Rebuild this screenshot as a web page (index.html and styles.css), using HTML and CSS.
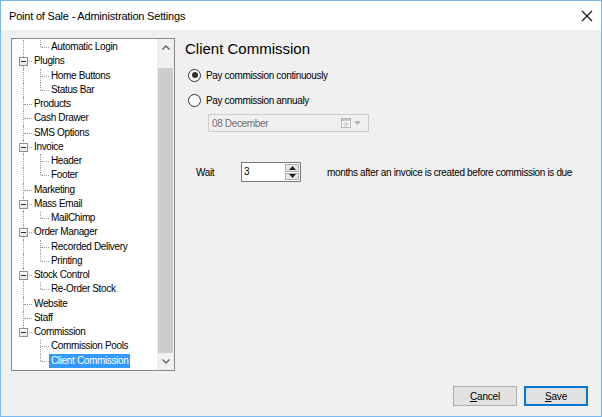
FILE: index.html
```html
<!DOCTYPE html>
<html lang="en">

<head>
    <meta charset="UTF-8">
    <meta name="viewport" content="width=device-width, initial-scale=1.0">
    <title>Point of Sale - Administration Settings</title>
    <link rel="stylesheet" href="styles.css">
</head>

<body>
    <div class="window">
        <div class="titlebar">
            <span class="title">Point of Sale - Administration Settings</span>
            <svg class="close" width="12" height="12" viewBox="0 0 12 12">
                <path d="M1 1 L11 11 M11 1 L1 11" stroke="#111" stroke-width="1.1" fill="none" />
            </svg>
        </div>

        <div class="content">
            <!-- Settings tree -->
            <div class="tree">
                <div class="tree-items">
                    <div class="row"><span class="cell v"></span><span class="cell l"></span><span class="label">Automatic Login</span></div>
                    <div class="row"><span class="cell t box"><i class="expander"></i></span><span class="label">Plugins</span></div>
                    <div class="row"><span class="cell v"></span><span class="cell t"></span><span class="label">Home Buttons</span></div>
                    <div class="row"><span class="cell v"></span><span class="cell l"></span><span class="label">Status Bar</span></div>
                    <div class="row"><span class="cell t"></span><span class="label">Products</span></div>
                    <div class="row"><span class="cell t"></span><span class="label">Cash Drawer</span></div>
                    <div class="row"><span class="cell t"></span><span class="label">SMS Options</span></div>
                    <div class="row"><span class="cell t box"><i class="expander"></i></span><span class="label">Invoice</span></div>
                    <div class="row"><span class="cell v"></span><span class="cell t"></span><span class="label">Header</span></div>
                    <div class="row"><span class="cell v"></span><span class="cell l"></span><span class="label">Footer</span></div>
                    <div class="row"><span class="cell t"></span><span class="label">Marketing</span></div>
                    <div class="row"><span class="cell t box"><i class="expander"></i></span><span class="label">Mass Email</span></div>
                    <div class="row"><span class="cell v"></span><span class="cell l"></span><span class="label">MailChimp</span></div>
                    <div class="row"><span class="cell t box"><i class="expander"></i></span><span class="label">Order Manager</span></div>
                    <div class="row"><span class="cell v"></span><span class="cell t"></span><span class="label">Recorded Delivery</span></div>
                    <div class="row"><span class="cell v"></span><span class="cell l"></span><span class="label">Printing</span></div>
                    <div class="row"><span class="cell t box"><i class="expander"></i></span><span class="label">Stock Control</span></div>
                    <div class="row"><span class="cell v"></span><span class="cell l"></span><span class="label">Re-Order Stock</span></div>
                    <div class="row"><span class="cell t"></span><span class="label">Website</span></div>
                    <div class="row"><span class="cell t"></span><span class="label">Staff</span></div>
                    <div class="row"><span class="cell l box"><i class="expander"></i></span><span class="label">Commission</span></div>
                    <div class="row"><span class="cell"></span><span class="cell t"></span><span class="label">Commission Pools</span></div>
                    <div class="row"><span class="cell"></span><span class="cell l"></span><span class="label selected">Client Commission</span></div>
                </div>
                <div class="scrollbar">
                    <div class="arrow">
                        <svg width="8" height="5" viewBox="0 0 8 5"><path d="M0.5 4.5 L4 1 L7.5 4.5" stroke="#606060" stroke-width="1.3" fill="none" /></svg>
                    </div>
                    <div class="track"><div class="thumb"></div></div>
                    <div class="arrow">
                        <svg width="8" height="5" viewBox="0 0 8 5"><path d="M0.5 0.5 L4 4 L7.5 0.5" stroke="#606060" stroke-width="1.3" fill="none" /></svg>
                    </div>
                </div>
            </div>

            <!-- Client commission settings -->
            <div class="panel">
                <h2>Client Commission</h2>
                <label class="radio first"><span class="dot checked"></span>Pay commission continuously</label>
                <label class="radio"><span class="dot"></span>Pay commission annualy</label>
                <div class="datepicker">
                    <span>08 December</span>
                    <span class="picker-icons">
                        <svg width="10" height="10" viewBox="0 0 10 10">
                            <rect x="0.5" y="0.5" width="9" height="9" fill="#fff" stroke="#b5b5b5" />
                            <rect x="1" y="1" width="8" height="2" fill="#c4c4c4" />
                            <path d="M2 5h6M2 7h6M4 4v5M6 4v5" stroke="#cfcfcf" />
                        </svg>
                        <svg width="7" height="4" viewBox="0 0 7 4"><path d="M0 0 L7 0 L3.5 4 Z" fill="#b5b5b5" /></svg>
                    </span>
                </div>
                <div class="wait">
                    <span class="wait-label">Wait</span>
                    <div class="numeric">
                        <span class="value">3</span>
                        <span class="spin">
                            <span class="spin-btn"><svg width="7" height="4" viewBox="0 0 7 4"><path d="M0 4 L7 4 L3.5 0 Z" fill="#222" /></svg></span>
                            <span class="spin-btn"><svg width="7" height="4" viewBox="0 0 7 4"><path d="M0 0 L7 0 L3.5 4 Z" fill="#222" /></svg></span>
                        </span>
                    </div>
                    <span class="wait-text">months after an invoice is created before commission is due</span>
                </div>
            </div>
        </div>

        <div class="actions">
            <button class="btn"><u>C</u>ancel</button>
            <button class="btn default"><u>S</u>ave</button>
        </div>
    </div>
</body>

</html>
```

FILE: styles.css
```css
/* Dialog window */
body {
    margin: 0;
    font-family: "Liberation Sans", Arial, sans-serif;
    font-size: 10px;
    letter-spacing: -0.35px;
    color: #000;
    background: #f0f0f0;
}

.window {
    width: 602px;
    height: 417px;
    box-sizing: border-box;
    border: 1px solid #7db7ee;
    background: #f0f0f0;
    display: flex;
    flex-direction: column;
}

.titlebar {
    height: 29px;
    background: #fff;
    display: flex;
    align-items: center;
    justify-content: space-between;
    padding: 0 8px 0 8px;
}

.title {
    font-size: 11px;
    letter-spacing: -0.2px;
    color: #000;
}

.close {
    display: block;
}

.content {
    display: flex;
    padding: 8px 0 0 10px;
}

/* Tree view */
.tree {
    width: 164px;
    height: 333px;
    box-sizing: border-box;
    border: 1px solid #828790;
    background: #fff;
    display: flex;
}

.tree-items {
    flex: 1;
    padding: 1px 0 0 3px;
    overflow: hidden;
}

.row {
    display: flex;
    height: 14.25px;
}

.cell {
    position: relative;
    width: 17px;
    flex-shrink: 0;
}

.cell.v::before,
.cell.t::before,
.cell.l::before {
    content: "";
    position: absolute;
    left: 8px;
    top: 0;
    bottom: 0;
    border-left: 1px dotted #a0a0a0;
}

.cell.l::before {
    bottom: auto;
    height: 50%;
}

.cell.t::after,
.cell.l::after {
    content: "";
    position: absolute;
    left: 9px;
    right: 0;
    top: 7px;
    border-top: 1px dotted #a0a0a0;
}

.expander {
    position: absolute;
    left: 4px;
    top: 3px;
    width: 7px;
    height: 7px;
    border: 1px solid #919191;
    background: linear-gradient(#fff, #e6e6e6);
    z-index: 1;
}

.expander::after {
    content: "";
    position: absolute;
    left: 1px;
    right: 1px;
    top: 3px;
    border-top: 1px solid #2a2a2a;
}

.label {
    padding: 0 2px;
    line-height: 14px;
    white-space: nowrap;
}

.selected {
    background: #3399ff;
    color: #fff;
}

.scrollbar {
    width: 17px;
    background: #f0f0f0;
    display: flex;
    flex-direction: column;
}

.arrow {
    height: 17px;
    display: flex;
    align-items: center;
    justify-content: center;
}

.track {
    flex: 1;
    padding-top: 12px;
    display: flex;
}

.thumb {
    flex: 1;
    margin: 0 1px;
    background: #cdcdcd;
}

/* Right panel */
.panel {
    margin-left: 10px;
    flex: 1;
}

h2 {
    margin: 2px 0 0;
    font-size: 15px;
    letter-spacing: 0;
    font-weight: normal;
    line-height: 18px;
}

.radio {
    display: flex;
    align-items: center;
    height: 14px;
    margin-top: 11px;
    margin-left: 3px;
}

.radio.first {
    margin-top: 10px;
}

.dot {
    width: 11px;
    height: 11px;
    border: 1px solid #333;
    border-radius: 50%;
    background: #fff;
    margin-right: 5px;
    display: flex;
    align-items: center;
    justify-content: center;
}

.dot.checked::after {
    content: "";
    width: 6px;
    height: 6px;
    border-radius: 50%;
    background: #333;
}

.datepicker {
    width: 161px;
    height: 18px;
    box-sizing: border-box;
    margin: 7px 0 0 23px;
    border: 1px solid #cccccc;
    background: #f0f0f0;
    color: #6d6d6d;
    display: flex;
    align-items: center;
    justify-content: space-between;
    padding: 0 7px 0 3px;
}

.picker-icons {
    display: flex;
    align-items: center;
    gap: 3px;
}

.picker-icons svg {
    display: block;
}

.wait {
    display: flex;
    align-items: center;
    margin-top: 30px;
}

.wait-label {
    width: 45px;
    flex-shrink: 0;
    margin-left: 11px;
}

.numeric {
    width: 60px;
    height: 20px;
    flex-shrink: 0;
    box-sizing: border-box;
    border: 1px solid #7a7a7a;
    background: #fff;
    display: flex;
    justify-content: space-between;
    padding: 1px;
}

.value {
    padding-left: 1px;
    line-height: 16px;
}

.spin {
    width: 14px;
    display: flex;
    flex-direction: column;
    gap: 1px;
}

.spin-btn {
    flex: 1;
    background: #e6e6e6;
    border: 1px solid #b0b0b0;
    display: flex;
    align-items: center;
    justify-content: center;
}

.spin-btn svg {
    display: block;
}

.wait-text {
    margin-left: 26px;
    white-space: nowrap;
}

/* Dialog buttons */
.actions {
    margin-top: auto;
    display: flex;
    justify-content: flex-end;
    gap: 7px;
    padding: 0 13px 10px 0;
}

.btn {
    width: 64px;
    height: 20px;
    box-sizing: border-box;
    border: 1px solid #adadad;
    background: #e1e1e1;
    font-family: "Liberation Sans", Arial, sans-serif;
    font-size: 10px;
    letter-spacing: -0.2px;
    color: #000;
    padding: 0;
}

.btn.default {
    border-color: #0078d7;
    box-shadow: inset 0 0 0 1px #0078d7;
}
```
